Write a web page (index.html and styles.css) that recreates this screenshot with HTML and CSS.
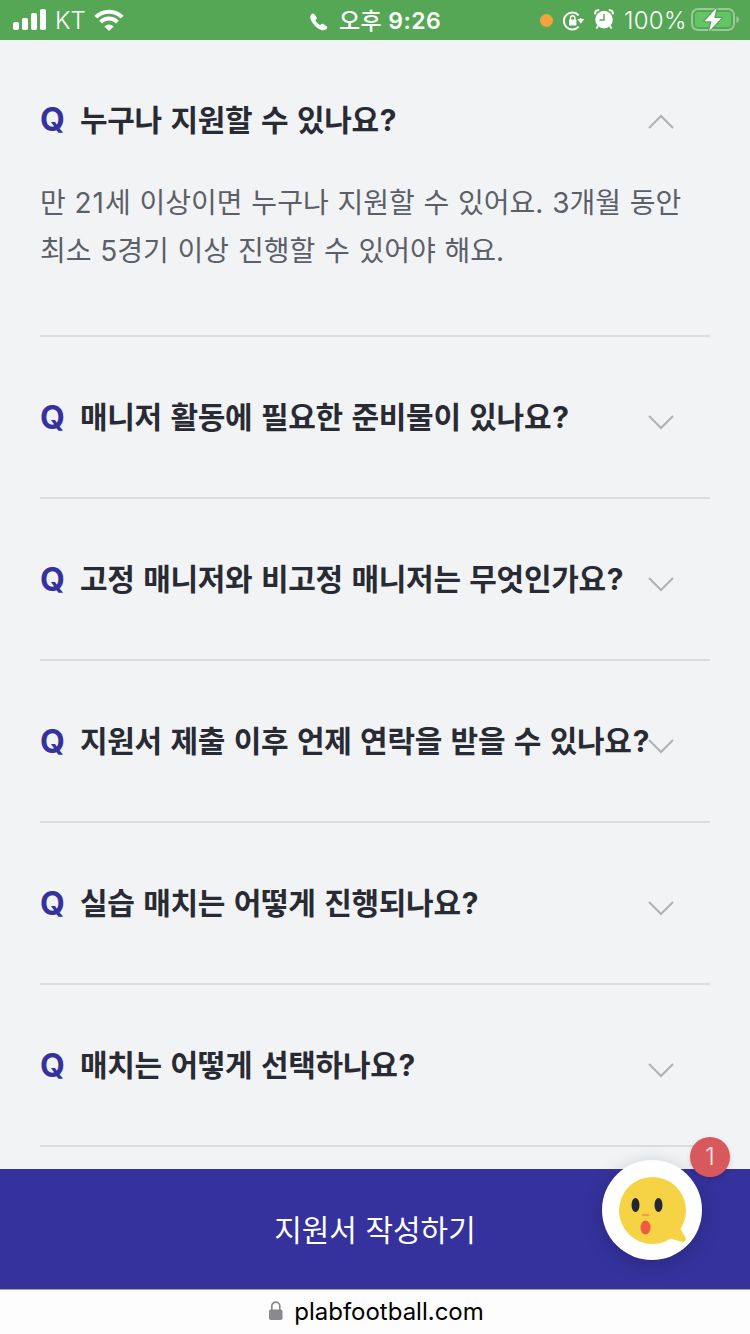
FILE: index.html
```html
<!DOCTYPE html>
<html lang="ko">
<head>
<meta charset="utf-8">
<title>plabfootball</title>
<link rel="stylesheet" href="styles.css">
</head>
<body>
<div class="screen">
  <header class="status">
    <div class="status-left">
      <svg class="signal" width="34" height="22" viewBox="0 0 34 22" fill="#fff"><rect x="0" y="13" width="6" height="8" rx="1.8"/><rect x="9" y="9" width="6" height="12" rx="1.8"/><rect x="18" y="4" width="6" height="17" rx="1.8"/><rect x="27" y="0" width="6" height="21" rx="1.8"/></svg>
      <span class="carrier">KT</span>
      <svg class="wifi" width="30" height="22" viewBox="0 0 30 22"><path d="M1.8 8.2a18.6 18.6 0 0 1 26.4 0M6.6 13.1a11.8 11.8 0 0 1 16.8 0" fill="none" stroke="#fff" stroke-width="4"/><path d="M10.3 17.4a6.8 6.8 0 0 1 9.4 0L15 22z" fill="#fff"/></svg>
    </div>
    <div class="status-mid">
      <svg class="phone" width="18" height="18" viewBox="0 0 18 18" fill="#fff"><path d="M1.1 1.7C2.2.4 3.4.2 4.3 1.2L6.4 4c.8 1.1.4 1.9-.5 2.8-.5.5-.3 1 .1 1.6.8 1.2 1.9 2.3 3.2 3.1.7.5 1.2.6 1.7.1.9-.9 1.7-1.1 2.7-.4l2.9 2c1.1.8.9 1.9-.3 3-1.800 1.700-4.800 1.400-8-.7-2.700-1.800-5-4.200-6.500-6.900C.1 5.900-.3 3.500 1.100 1.700z"/></svg>
      <span class="time"><span class="meridiem">오후</span> 9:26</span>
    </div>
    <div class="status-right">
      <i class="dot"></i>
      <svg class="rotation" width="22" height="20" viewBox="0 0 22 20"><path d="M15.700 4.300A8.500 8.500 0 1 0 15.700 15.700M17.200 7.200A8.500 8.500 0 0 1 18 10" fill="none" stroke="#fff" stroke-width="2"/><path d="M14.300 8h7l-3.500 4.800z" fill="#fff"/><rect x="6" y="8.600" width="7.400" height="5.800" rx=".7" fill="#fff"/><path d="M7.500 9V7a2.200 2.200 0 0 1 4.400 0V9" fill="none" stroke="#fff" stroke-width="1.400"/></svg>
      <svg class="alarm" width="20" height="21" viewBox="0 0 20 21"><circle cx="10" cy="10.600" r="8.800" fill="#fff"/><path d="M1.200 5.300Q.6 1.400 5.200 1M18.800 5.300Q19.400 1.400 14.800 1" fill="none" stroke="#fff" stroke-width="2"/><path d="M4 17l-1.600 2.600M16 17l1.600 2.600" stroke="#fff" stroke-width="2"/><path d="M10 5v6H5.500" fill="none" stroke="#55a755" stroke-width="1.400"/></svg>
      <span class="percent">100%</span>
      <svg class="battery" width="49" height="26" viewBox="0 0 49 26"><rect x="1" y="2" width="42" height="21" rx="6" fill="none" stroke="#99ca99" stroke-width="2"/><rect x="4" y="5" width="36" height="15" rx="3" fill="#65c466"/><path d="M45.500 9v7q2.500-1 2.500-3.500T45.500 9z" fill="#99ca99"/><path d="M25.500 1L13.500 14.200h7L18.200 24 30.500 11h-7.200z" fill="#fff" stroke="#55a755" stroke-width="2.500" paint-order="stroke" stroke-linejoin="round"/></svg>
    </div>
  </header>

  <main class="faq">
    <section class="item open">
      <div class="question"><b class="q">Q</b><h2>누구나 지원할 수 있나요<span class="mark">?</span></h2><svg class="chevron" viewBox="0 0 26 15"><path d="M1 14L13 2l12 12"/></svg></div>
      <p class="answer">만 <span class="digits">21</span>세 이상이면 누구나 지원할 수 있어요. 3개월 동안<br>최소 5경기 이상 진행할 수 있어야 해요.</p>
    </section>
    <section class="item"><div class="question"><b class="q">Q</b><h2>매니저 활동에 필요한 준비물이 있나요<span class="mark">?</span></h2><svg class="chevron" viewBox="0 0 26 15"><path d="M1 1l12 12L25 1"/></svg></div></section>
    <section class="item"><div class="question"><b class="q">Q</b><h2>고정 매니저와 비고정 매니저는 무엇인가요<span class="mark">?</span></h2><svg class="chevron" viewBox="0 0 26 15"><path d="M1 1l12 12L25 1"/></svg></div></section>
    <section class="item"><div class="question"><b class="q">Q</b><h2>지원서 제출 이후 언제 연락을 받을 수 있나요<span class="mark">?</span></h2><svg class="chevron" viewBox="0 0 26 15"><path d="M1 1l12 12L25 1"/></svg></div></section>
    <section class="item"><div class="question"><b class="q">Q</b><h2>실습 매치는 어떻게 진행되나요<span class="mark">?</span></h2><svg class="chevron" viewBox="0 0 26 15"><path d="M1 1l12 12L25 1"/></svg></div></section>
    <section class="item"><div class="question"><b class="q">Q</b><h2>매치는 어떻게 선택하나요<span class="mark">?</span></h2><svg class="chevron" viewBox="0 0 26 15"><path d="M1 1l12 12L25 1"/></svg></div></section>
  </main>

  <div class="apply"><span>지원서 작성하기</span></div>
  <footer class="address">
    <svg width="14" height="20" viewBox="0 0 14 20"><rect x="0" y="8.500" width="13.500" height="10.500" rx="1.800" fill="#8a8a8e"/><path d="M2.800 9V5.200a4 4 0 0 1 8 0V9" fill="none" stroke="#8a8a8e" stroke-width="1.700"/></svg>
    <span>plabfootball.com</span>
  </footer>

  <div class="chat">
    <svg width="68" height="68" viewBox="0 0 68 68"><circle cx="33.500" cy="33.500" r="33.500" fill="#f6d344"/><path d="M61 51l5.500 9.500q1.200 4.500-3.500 4.500L50 61z" fill="#f6d344"/><ellipse cx="16.500" cy="28" rx="4" ry="7" fill="#23272f"/><ellipse cx="39.500" cy="28" rx="4" ry="7" fill="#23272f"/><ellipse cx="26.500" cy="38" rx="4" ry="1.200" fill="#f3a03f"/><ellipse cx="26.500" cy="50.500" rx="5" ry="7" fill="#ed5b42"/></svg>
    <span class="badge">1</span>
  </div>
</div>
</body>
</html>
```
FILE: styles.css
```css
* { box-sizing: border-box; }
body {
  margin: 0;
  background: #f2f3f5;
  font-family: Inter, "Noto Sans CJK KR", sans-serif;
}
svg { display: block; flex: none; }
.screen {
  position: relative;
  width: 750px;
  height: 1334px;
  display: flex;
  flex-direction: column;
  overflow: hidden;
}
.status {
  height: 40px;
  flex: none;
  display: grid;
  grid-template-columns: 310px 1fr 210px;
  align-items: center;
  background: #55a755;
  color: #fff;
  line-height: 40px;
  white-space: nowrap;
}
.status-left, .status-mid, .status-right { display: flex; align-items: center; height: 40px; }
.status-left { padding-left: 13px; }
.carrier { margin-left: 8px; padding-top: 2px; width: 32px; font-size: 24px; font-weight: 300; }
.wifi { margin-left: 7px; }
.phone { margin-top: 3px; }
.time { margin-left: 11px; padding-top: 2px; font-size: 23px; font-weight: 600; letter-spacing: 0.4px; }
.meridiem { font-weight: 500; }
.dot { width: 13px; height: 13px; border-radius: 50%; background: #f2a33c; }
.rotation { margin-left: 10px; margin-top: 1px; }
.alarm { margin-left: 9px; margin-top: -1px; }
.percent { margin-left: 10px; padding-top: 2px; width: 63px; font-size: 24px; font-weight: 300; letter-spacing: 0.3px; }
.battery { margin-left: 4px; }
.faq { flex: none; height: 1129px; padding: 0 40px; overflow: hidden; }
.item { height: 162px; border-bottom: 2px solid #dbdcdf; }
.item.open { height: 297px; }
.question { display: flex; align-items: center; height: 160px; padding-right: 36px; }
.open .question { height: 159px; }
.q { width: 40px; flex: none; padding-top: 1px; font-size: 32px; color: #35329e; line-height: 40px; }
h2 {
  flex: 1;
  min-width: 0;
  margin: 0;
  font-size: 30px;
  font-weight: 700;
  line-height: 40px;
  letter-spacing: -0.3px;
  word-spacing: 1.8px;
  white-space: nowrap;
  color: #282a34;
}
.mark { margin-left: 1px; }
.chevron {
  width: 26px;
  height: 15px;
  margin-top: 10px;
  fill: none;
  stroke: #b0b1b3;
  stroke-width: 2;
}
.open .chevron { margin-top: 3px; }
.answer {
  margin: -20px 0 0;
  font-size: 28px;
  line-height: 48px;
  word-spacing: 0.9px;
  color: #5b5f69;
  white-space: nowrap;
}
.digits { letter-spacing: 1px; }
.apply {
  flex: none;
  height: 120px;
  padding-bottom: 3px;
  display: flex;
  align-items: center;
  justify-content: center;
  background: #35329e;
  color: #fff;
  font-size: 30px;
  font-weight: 400;
}
.address {
  flex: none;
  height: 45px;
  padding: 0 0 2px 3px;
  display: flex;
  align-items: center;
  justify-content: center;
  gap: 11px;
  border-top: 1px solid #a3a3ad;
  background: #fdfdfd;
  color: #000;
  font-size: 24px;
}
.chat {
  position: absolute;
  left: 602px;
  top: 1160px;
  width: 100px;
  height: 100px;
  padding: 16.5px;
  border-radius: 50%;
  background: #fff;
  box-shadow: 0 4px 20px rgba(0, 0, 0, 0.2);
}
.badge {
  position: absolute;
  left: 88px;
  top: -23px;
  width: 40px;
  height: 40px;
  border-radius: 50%;
  background: #d8595d;
  color: #fbeeee;
  font-size: 24px;
  font-weight: 300;
  line-height: 39px;
  text-align: center;
  box-shadow: 0 2px 5px rgba(0, 0, 0, 0.15);
}
```
